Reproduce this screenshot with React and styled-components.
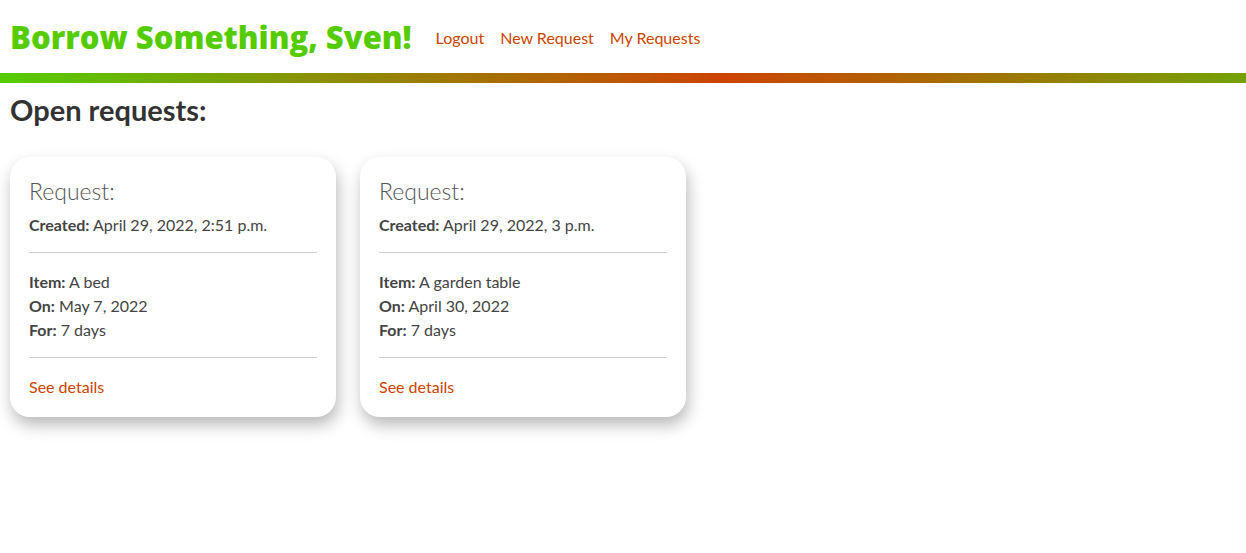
import React from "react";
import styled, { createGlobalStyle } from "styled-components";

const Global = createGlobalStyle`
  html, body { margin: 0; padding: 0; background: #fff; }
  body { font-family: Lato, "Open Sans", sans-serif; color: #444; min-height: 100vh; }
  * { box-sizing: border-box; }
`;

const Header = styled.header`
  display: flex;
  align-items: center;
  height: 73px;
  padding: 0 10px;
  gap: 24px;
`;

const Brand = styled.h1`
  margin: 0;
  font-family: "Open Sans", Lato, sans-serif;
  font-size: 31px;
  font-weight: 800;
  color: #55cc00;
  letter-spacing: 0;
`;

const Nav = styled.nav`
  display: flex;
  gap: 16px;
  padding-top: 2px;
`;

const NavLink = styled.a`
  color: #cc4400;
  font-size: 16px;
  text-decoration: none;
`;

const Bar = styled.div`
  height: 10px;
  background: linear-gradient(90deg, #55cc00 0%, #cc4400 58%, #74a200 100%);
`;

const Main = styled.main`
  padding: 10px 10px 40px;
`;

const Heading = styled.h2`
  margin: 0 0 30px;
  font-size: 29px;
  font-weight: 700;
  color: #333;
  line-height: 34px;
`;

const Cards = styled.div`
  display: flex;
  gap: 24px;
  align-items: flex-start;
`;

const Card = styled.div`
  width: 326px;
  background: #fff;
  border-radius: 20px;
  box-shadow: 2px 8px 16px rgba(0, 0, 0, 0.28);
  padding: 18px 19px 18px;
`;

const CardTitle = styled.h3`
  margin: 0 0 6px;
  font-size: 23px;
  font-weight: 300;
  color: #555;
  line-height: 32px;
`;

const Line = styled.div`
  font-size: 16px;
  line-height: 24px;
  color: #444;
  b { font-weight: 700; }
`;

const Divider = styled.hr`
  border: none;
  border-top: 1px solid #ccc;
  margin: ${(p) => p.$top}px 0 ${(p) => p.$bottom}px;
`;

const Details = styled.a`
  color: #cc4400;
  font-size: 16px;
  line-height: 24px;
  text-decoration: none;
`;

const requests = [
  { created: "April 29, 2022, 2:51 p.m.", item: "A bed", on: "May 7, 2022", days: "7 days" },
  { created: "April 29, 2022, 3 p.m.", item: "A garden table", on: "April 30, 2022", days: "7 days" },
];

export default function App() {
  return (
    <>
      <Global />
      <Header>
        <Brand>Borrow Something, Sven!</Brand>
        <Nav>
          <NavLink href="#">Logout</NavLink>
          <NavLink href="#">New Request</NavLink>
          <NavLink href="#">My Requests</NavLink>
        </Nav>
      </Header>
      <Bar />
      <Main>
        <Heading>Open requests:</Heading>
        <Cards>
          {requests.map((r, i) => (
            <Card key={i}>
              <CardTitle>Request:</CardTitle>
              <Line><b>Created:</b> {r.created}</Line>
              <Divider $top={15} $bottom={17} />
              <Line><b>Item:</b> {r.item}</Line>
              <Line><b>On:</b> {r.on}</Line>
              <Line><b>For:</b> {r.days}</Line>
              <Divider $top={15} $bottom={17} />
              <Details href="#">See details</Details>
            </Card>
          ))}
        </Cards>
      </Main>
    </>
  );
}
